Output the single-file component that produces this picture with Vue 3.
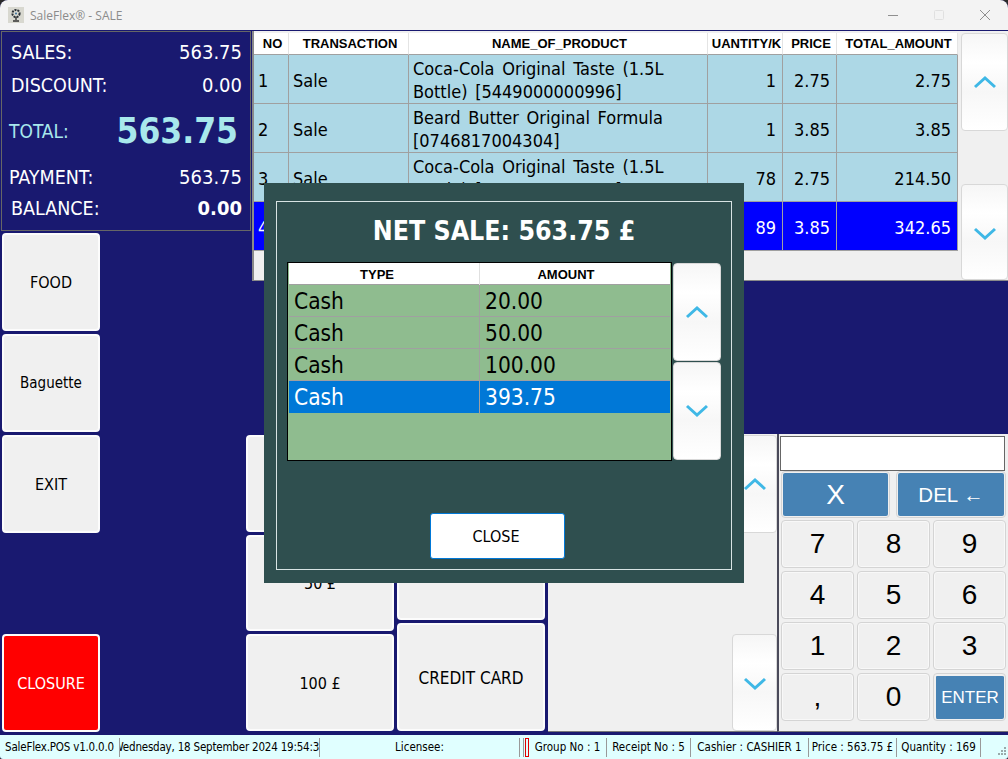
<template>
  <div class="window">
    <header class="titlebar">
      <svg class="logo" width="16" height="16" viewBox="0 0 16 16">
        <rect width="16" height="16" fill="#d8d8d0" />
        <circle cx="8" cy="6.500" r="3.600" fill="none" stroke="#2a3036" stroke-width="2" stroke-dasharray="2 1" />
        <circle cx="8" cy="6.500" r="1" fill="#3a6f9a" />
        <path d="M8 10v3M5 14h6" stroke="#333" stroke-width="1.400" />
      </svg>
      <span class="title">SaleFlex® - SALE</span>
      <div class="controls">
        <svg width="12" height="12" viewBox="0 0 12 12"><path d="M1 6.500h10" stroke="#8f8f8f" /></svg>
        <svg width="12" height="12" viewBox="0 0 12 12"><rect x="1.500" y="1.500" width="9" height="9" rx="1" fill="none" stroke="#e0e0e0" /></svg>
        <svg width="12" height="12" viewBox="0 0 12 12"><path d="M1 1l10 10M11 1L1 11" stroke="#8f8f8f" /></svg>
      </div>
    </header>

    <main class="main">
      <aside class="left">
        <section class="summary">
          <div class="sum-row sales"><span>SALES:</span><span class="val">563.75</span></div>
          <div class="sum-row discount"><span>DISCOUNT:</span><span class="val">0.00</span></div>
          <div class="sum-row total"><span>TOTAL:</span><b>563.75</b></div>
          <div class="sum-row payment"><span>PAYMENT:</span><span class="val">563.75</span></div>
          <div class="sum-row balance"><span>BALANCE:</span><b>0.00</b></div>
        </section>
        <div class="menu">
          <button class="btn">FOOD</button>
          <button class="btn narrow">Baguette</button>
          <button class="btn">EXIT</button>
          <button class="btn closure">CLOSURE</button>
        </div>
      </aside>

      <div class="right">
        <section class="sale-panel">
          <table class="grid">
            <colgroup>
              <col v-for="w in saleCols" :key="w" :style="{ width: w + 'px' }" />
            </colgroup>
            <thead>
              <tr>
                <th v-for="h in saleHead" :key="h"><div class="clip">{{ h }}</div></th>
              </tr>
            </thead>
            <tbody>
              <tr v-for="r in sales" :key="r.no" :class="{ sel: r.sel }">
                <td>{{ r.no }}</td>
                <td>{{ r.tx }}</td>
                <td class="name">{{ r.name }}</td>
                <td class="num">{{ r.qty }}</td>
                <td class="num">{{ r.price }}</td>
                <td class="num">{{ r.total }}</td>
              </tr>
            </tbody>
          </table>
          <div class="scroll-col">
            <button class="scroll">
              <svg width="24" height="14" viewBox="0 0 24 14"><path d="M2 12L12 3l10 9" class="chev" /></svg>
            </button>
            <button class="scroll">
              <svg width="24" height="14" viewBox="0 0 24 14"><path d="M2 2l10 9 10-9" class="chev" /></svg>
            </button>
          </div>
        </section>

        <section class="bottom">
          <div class="pay pay-a">
            <button class="btn">20 £</button>
            <button class="btn">50 £</button>
            <button class="btn">100 £</button>
          </div>
          <div class="pay pay-b">
            <button class="btn">CASH</button>
            <button class="btn">CHECK</button>
            <button class="btn wide">CREDIT CARD</button>
          </div>
          <div class="blank">
            <button class="scroll">
              <svg width="24" height="14" viewBox="0 0 24 14"><path d="M2 12L12 3l10 9" class="chev" /></svg>
            </button>
            <button class="scroll down-short">
              <svg width="24" height="14" viewBox="0 0 24 14"><path d="M2 2l10 9 10-9" class="chev" /></svg>
            </button>
          </div>
          <div class="numpad">
            <div class="display"></div>
            <div class="pad-top">
              <button class="key blue big">X</button>
              <button class="key blue mid">DEL ←</button>
            </div>
            <div class="digits">
              <button v-for="k in keys" :key="k" class="key" :class="{ blue: k === 'ENTER', small: k === 'ENTER' }">{{ k }}</button>
            </div>
          </div>
        </section>
      </div>
    </main>

    <footer class="status">
      <span class="st tight" style="width: 120px">SaleFlex.POS v1.0.0.0</span>
      <span class="st tight" style="width: 200px"><span>Wednesday, 18 September 2024 19:54:31</span></span>
      <span class="st" style="width: 200px">Licensee:</span>
      <span class="st" style="width: 4px"></span>
      <span class="st red"></span>
      <span class="st" style="width: 78px">Group No : 1</span>
      <span class="st" style="width: 84px">Receipt No : 5</span>
      <span class="st" style="width: 118px">Cashier : CASHIER 1</span>
      <span class="st" style="width: 88px">Price : 563.75 £</span>
      <span class="st" style="width: 84px">Quantity : 169</span>
      <svg class="gripper" width="12" height="12" viewBox="0 0 12 12">
        <g fill="#9aa"><rect x="9" y="1" width="2" height="2" /><rect x="6" y="4" width="2" height="2" /><rect x="9" y="4" width="2" height="2" /><rect x="3" y="7" width="2" height="2" /><rect x="6" y="7" width="2" height="2" /><rect x="9" y="7" width="2" height="2" /></g>
      </svg>
    </footer>

    <div class="modal">
      <div class="modal-inner">
        <h2 class="net">NET SALE: 563.75 £</h2>
        <div class="pay-area">
          <div class="pay-table">
            <div class="pt-head"><div class="h-type">TYPE</div><div class="h-amount">AMOUNT</div></div>
            <div v-for="(p, i) in payments" :key="i" class="pt-row" :class="{ on: p.on }">
              <div>Cash</div><div>{{ p.amount }}</div>
            </div>
          </div>
          <div class="modal-scroll">
            <button class="scroll">
              <svg width="24" height="14" viewBox="0 0 24 14"><path d="M2 12L12 3l10 9" class="chev" /></svg>
            </button>
            <button class="scroll">
              <svg width="24" height="14" viewBox="0 0 24 14"><path d="M2 2l10 9 10-9" class="chev" /></svg>
            </button>
          </div>
        </div>
        <button class="close">CLOSE</button>
      </div>
    </div>
  </div>
</template>

<script setup>
const saleCols = [35, 120, 299, 75, 54, 121];
const saleHead = ['NO', 'TRANSACTION', 'NAME_OF_PRODUCT', 'QUANTITY/KG', 'PRICE', 'TOTAL_AMOUNT'];

const sales = [
  { no: 1, tx: 'Sale', name: 'Coca-Cola Original Taste (1.5L Bottle) [5449000000996]', qty: 1, price: '2.75', total: '2.75' },
  { no: 2, tx: 'Sale', name: 'Beard Butter Original Formula [0746817004304]', qty: 1, price: '3.85', total: '3.85' },
  { no: 3, tx: 'Sale', name: 'Coca-Cola Original Taste (1.5L Bottle) [5449000000996]', qty: 78, price: '2.75', total: '214.50' },
  { no: 4, tx: 'Sale', name: 'Beard Butter Original Formula [0746817004304]', qty: 89, price: '3.85', total: '342.65', sel: true },
];

const payments = [
  { amount: '20.00' },
  { amount: '50.00' },
  { amount: '100.00' },
  { amount: '393.75', on: true },
];

const keys = ['7', '8', '9', '4', '5', '6', '1', '2', '3', ',', '0', 'ENTER'];
</script>

<style>
html, body { margin: 0; background: #2a2a2a; overflow: hidden; }
</style>

<style scoped>
.window {
  position: relative;
  width: 1008px;
  height: 759px;
  display: flex;
  flex-direction: column;
  overflow: hidden;
  border-radius: 8px 8px 3px 3px;
  background: #191970;
  font-family: "DejaVu Sans", sans-serif;
  font-stretch: condensed;
  color: #000;
}
button { font-family: inherit; font-stretch: inherit; cursor: pointer; padding: 0; }

.titlebar {
  height: 30px;
  flex: none;
  display: flex;
  align-items: center;
  background: #f3f3f3;
  padding-left: 8px;
}
.logo { margin-right: 6px; }
.title {
  font-family: "Open Sans", sans-serif;
  font-stretch: normal;
  font-size: 12px;
  color: #8b8b8b;
}
.controls {
  margin-left: auto;
  display: flex;
  gap: 34px;
  padding-right: 17px;
}

.main { flex: 1; display: flex; min-height: 0; }

.left {
  flex: 0 0 246px;
  width: 246px;
  display: flex;
  flex-direction: column;
  padding-bottom: 3px;
  box-sizing: border-box;
}
.summary {
  width: 250px;
  height: 200px;
  box-sizing: border-box;
  margin: 1px 0 0 1px;
  border: 1px solid #666;
  color: #fff;
  display: grid;
  grid-template-rows: 38px 28px 64px 28px 34px;
  padding: 1px 8px 0 7px;
  position: relative;
  z-index: 1;
}
.sum-row { display: flex; justify-content: space-between; align-items: center; font-size: 19.500px; }
.sum-row .val { font-size: 20px; }
.sales, .discount, .balance { padding-left: 2px; }
.total { color: #a8e8ec; font-size: 19px; }
.total b { font-size: 35px; margin-right: 4px; font-weight: 700; }
.balance b { font-size: 20px; }

.menu {
  flex: 1;
  display: flex;
  flex-direction: column;
  gap: 3px;
  margin-top: 2px;
  padding-left: 2px;
}
.btn {
  background: #f0f0f0;
  border: 2px solid #fcfcfc;
  border-radius: 4px;
  font-size: 16px;
  padding-top: 2px;
  color: #000;
  box-sizing: border-box;
}
.btn.narrow { font-size: 15px; }
.btn.wide { font-size: 17px; }
.menu .btn { width: 98px; height: 98px; padding-top: 0; }
.menu .closure {
  margin-top: auto;
  background: #ff0000;
  color: #fff;
}

.right {
  flex: 1;
  min-width: 0;
  display: flex;
  flex-direction: column;
  padding-bottom: 3px;
  box-sizing: border-box;
}
.sale-panel {
  height: 250px;
  margin: 1px 0 0 6px;
  display: flex;
  align-items: stretch;
  background: #f0f0f0;
  border: 1px solid #8a8a8a;
  border-width: 0 0 1px 2px;
  box-sizing: border-box;
  padding-top: 2px;
}
.grid {
  width: 704px;
  height: 0;
  table-layout: fixed;
  border-collapse: separate;
  border-spacing: 0;
  font-size: 18px;
  line-height: 23px;
}
.grid th {
  height: 22px;
  box-sizing: border-box;
  padding: 1px 1px 0 4px;
  background: #fff;
  border-right: 1px solid #e4e4e4;
  border-bottom: 1px solid #a0a0a0;
  font-family: "Liberation Sans", sans-serif;
  font-stretch: normal;
  font-size: 13px;
  line-height: 20px;
  font-weight: 700;
}
.clip {
  display: flex;
  justify-content: center;
  overflow: hidden;
  white-space: nowrap;
}
.grid td {
  height: 49px;
  box-sizing: border-box;
  padding: 2px 4px 0;
  background: #add8e6;
  border-right: 1px solid #a0a0a0;
  border-bottom: 1px solid #a0a0a0;
}
.grid td.name { word-spacing: 2.500px; }
.grid td.num { text-align: right; padding-right: 6px; }
.grid .sel td { background: #0000ff; color: #fff; }

.scroll-col {
  flex: 1;
  display: flex;
  flex-direction: column;
  justify-content: space-between;
  margin-left: 3px;
}
.scroll {
  display: flex;
  align-items: center;
  justify-content: center;
  background: linear-gradient(180deg, #f6f6f6, #ffffff 30%, #f7f7f7 60%, #ffffff);
  border: 1px solid #d8d8d8;
  border-radius: 4px;
  box-sizing: border-box;
}
.scroll-col .scroll { height: 98px; }
.scroll-col .scroll:last-child { height: 96px; padding-top: 3px; }
.chev { fill: none; stroke: #3fb8e6; stroke-width: 3; }

.bottom {
  margin-top: auto;
  height: 298px;
  display: flex;
}
.pay {
  width: 148px;
  margin: 1px 0 1px 0;
  display: grid;
  gap: 3px;
}
.pay-a { grid-template-rows: 1fr 1fr 1fr; }
.pay-b { margin-left: 3px; grid-template-rows: 1fr 1fr 108px; }
.blank {
  width: 229px;
  margin-left: 3px;
  background: #f0f0f0;
  display: flex;
  flex-direction: column;
  justify-content: space-between;
  align-items: flex-end;
  padding-top: 1px;
  box-sizing: border-box;
  border-bottom: 1px solid #777;
}
.blank .scroll { width: 45px; height: 98px; }
.blank .down-short { height: 97px; padding-top: 2px; }

.numpad {
  flex: 1;
  background: #f0f0f0;
  border-left: 2px solid #4a4a5a;
  border-bottom: 1px solid #777;
  box-sizing: border-box;
  padding: 2px 2px 0 1px;
}
.display {
  height: 35px;
  background: #fff;
  border: 1px solid #666;
  box-sizing: border-box;
  margin-right: 1px;
}
.pad-top {
  display: grid;
  grid-template-columns: 109px 110px;
  gap: 6px;
  margin: 0 0 2px 1px;
}
.digits {
  display: grid;
  grid-template-columns: repeat(3, 73px);
  grid-auto-rows: 48px;
  gap: 3px;
  margin-left: 1px;
}
.key {
  background: #f0f0f0;
  border: 1px solid #d4d4d4;
  box-shadow: inset 0 0 0 1px #f8f8f8;
  border-radius: 4px;
  font-family: "Liberation Sans", sans-serif;
  font-stretch: normal;
  font-size: 28px;
  color: #000;
  box-sizing: border-box;
}
.pad-top .key { height: 47px; }
.key.blue {
  background: #4682b4 content-box;
  color: #fff;
  border: 1px solid #d4d4d4;
  box-shadow: none;
  padding: 1px;
}
.key.mid { font-size: 20.500px; }
.key.small { font-size: 17px; padding: 2px 1px 1px 2px; }

.status {
  height: 24px;
  flex: none;
  display: flex;
  align-items: center;
  background: #e0ffff;
  font-size: 11.500px;
  line-height: 14px;
  position: relative;
}
.st {
  height: 19px;
  display: flex;
  align-items: center;
  justify-content: center;
  border-right: 1px solid #999;
  box-sizing: border-box;
  white-space: nowrap;
  overflow: hidden;
  flex: none;
}
.st.tight { letter-spacing: -0.200px; }
.red {
  width: 4px;
  margin-left: 1px;
  border: 1px solid #e00000;
}
.gripper { position: absolute; right: 1px; bottom: 1px; }

.modal {
  position: absolute;
  left: 264px;
  top: 183px;
  width: 480px;
  height: 400px;
  background: #2f4f4f;
  box-sizing: border-box;
  padding: 18px 12px 13px;
}
.modal-inner {
  height: 100%;
  box-sizing: border-box;
  border: 1px solid #d8e4e4;
  display: flex;
  flex-direction: column;
  padding: 0 10px 10px;
}
.net {
  margin: 0;
  height: 60px;
  padding-bottom: 3px;
  box-sizing: border-box;
  display: flex;
  align-items: center;
  justify-content: center;
  color: #fff;
  font-size: 26.500px;
  font-weight: 700;
}
.pay-area { display: flex; }
.pay-table {
  width: 385px;
  height: 199px;
  box-sizing: border-box;
  border: 1px solid #000;
  background: #8fbc8f;
  font-size: 22.500px;
}
.pt-head, .pt-row {
  display: grid;
  grid-template-columns: 191px 1fr;
  margin: 0 1px;
}
.pt-head {
  height: 22px;
  background: #fff;
  border-bottom: 1px solid #a0a0a0;
  box-sizing: border-box;
  font-family: "Liberation Sans", sans-serif;
  font-stretch: normal;
  font-size: 13px;
  font-weight: 700;
  text-align: center;
  line-height: 24px;
}
.h-type { border-right: 1px solid #e0e0e0; padding-right: 14px; }
.h-amount { padding-right: 18px; }
.pt-row {
  height: 32px;
  box-sizing: border-box;
  border-bottom: 1px solid #a0a0a0;
  line-height: 33px;
}
.pt-row > div { padding-left: 5px; }
.pt-row > div:first-child { border-right: 1px solid #a0a0a0; }
.pt-row.on { background: #0078d7; color: #fff; border-bottom-color: #0078d7; }
.modal-scroll {
  display: flex;
  flex-direction: column;
  gap: 1px;
  margin: 1px 0 0 1px;
}
.modal-scroll .scroll { width: 48px; height: 98px; }
.close {
  margin-top: auto;
  margin-left: 143px;
  width: 135px;
  height: 46px;
  background: #fff;
  border: 1px solid #0078d7;
  border-radius: 3px;
  font-size: 16px;
  padding: 1px 3px 0 0;
  align-self: flex-start;
}
</style>
